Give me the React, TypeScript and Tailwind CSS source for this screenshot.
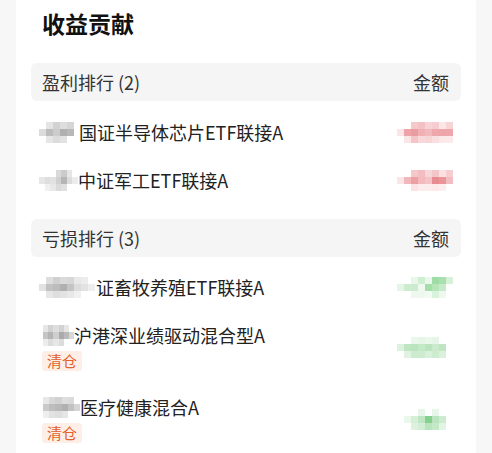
import React from 'react';

type Grid = string[][];

// mosaic blocks standing in for the pixelated parts of the screenshot
const Mosaic = ({ grid, className = '' }: { grid: Grid; className?: string }) => (
  <div className={`flex flex-col blur-[0.4px] ${className}`}>
    {grid.map((row, i) => (
      <div key={i} className="flex">
        {row.map((c, j) => (
          <div key={j} className={`w-[7px] h-[7px] ${c}`} />
        ))}
      </div>
    ))}
  </div>
);

const T = 'bg-transparent';

const gray1: Grid = [
  [T, 'bg-[#e4e4e4]', 'bg-[#d2d2d2]', 'bg-[#dedede]', 'bg-[#d6d6d6]'],
  ['bg-[#dcdcdc]', 'bg-[#bdbdbd]', 'bg-[#cccccc]', 'bg-[#b0b0b0]', 'bg-[#b8b8b8]'],
  [T, 'bg-[#e6e6e6]', 'bg-[#dcdcdc]', 'bg-[#e2e2e2]', T],
];
const gray2: Grid = [
  [T, T, T, 'bg-[#dadada]', 'bg-[#cbcbcb]', 'bg-[#e6e6e6]', T],
  ['bg-[#e6e6e6]', 'bg-[#dedede]', 'bg-[#e2e2e2]', 'bg-[#d0d0d0]', 'bg-[#b6b6b6]', 'bg-[#dcdcdc]', 'bg-[#ececec]'],
  [T, 'bg-[#f0f0f0]', 'bg-[#e8e8e8]', 'bg-[#dadada]', 'bg-[#e0e0e0]', T, T],
];
const gray3: Grid = [
  [T, 'bg-[#dedede]', 'bg-[#d0d0d0]', 'bg-[#dadada]', 'bg-[#d6d6d6]', 'bg-[#e8e8e8]', 'bg-[#ececec]', T],
  ['bg-[#e2e2e2]', 'bg-[#c2c2c2]', 'bg-[#bcbcbc]', 'bg-[#b0b0b0]', 'bg-[#c4c4c4]', 'bg-[#dcdcdc]', 'bg-[#e2e2e2]', 'bg-[#eeeeee]'],
  [T, 'bg-[#e6e6e6]', 'bg-[#dedede]', 'bg-[#e2e2e2]', 'bg-[#e8e8e8]', 'bg-[#f0f0f0]', T, T],
];
const gray4: Grid = [
  ['bg-[#e6e6e6]', 'bg-[#d2d2d2]', 'bg-[#dedede]', 'bg-[#d2d2d2]', 'bg-[#e6e6e6]', T],
  ['bg-[#c4c4c4]', 'bg-[#b4b4b4]', 'bg-[#cecece]', 'bg-[#aaaaaa]', 'bg-[#bababa]', 'bg-[#d8d8d8]'],
  ['bg-[#ececec]', 'bg-[#dcdcdc]', 'bg-[#e6e6e6]', 'bg-[#dcdcdc]', T, T],
];
const gray5: Grid = [
  ['bg-[#e8e8e8]', 'bg-[#d8d8d8]', 'bg-[#d2d2d2]', 'bg-[#dedede]', 'bg-[#dadada]', T],
  ['bg-[#cacaca]', 'bg-[#bebebe]', 'bg-[#b8b8b8]', 'bg-[#b0b0b0]', 'bg-[#c2c2c2]', 'bg-[#d6d6d6]'],
  ['bg-[#eeeeee]', 'bg-[#e2e2e2]', 'bg-[#dedede]', 'bg-[#e6e6e6]', T, T],
];

const red1: Grid = [
  [T, T, 'bg-[#f5c9cb]', 'bg-[#f3c0c3]', 'bg-[#f7d3d5]', 'bg-[#f5cccf]', 'bg-[#fbe6e7]', 'bg-[#f7d5d7]'],
  ['bg-[#fbe5e6]', 'bg-[#eea3a8]', 'bg-[#eb9ca1]', 'bg-[#f0b0b4]', 'bg-[#f2b9bc]', 'bg-[#eea8ac]', 'bg-[#eda5aa]', 'bg-[#eea6ab]'],
  [T, 'bg-[#fbe6e7]', 'bg-[#f4c4c7]', 'bg-[#f8d8da]', 'bg-[#f7d4d6]', 'bg-[#fadfe0]', 'bg-[#fbe9ea]', 'bg-[#fce9ea]'],
];
const red2: Grid = [
  [T, T, 'bg-[#f5c8cb]', 'bg-[#f2bcc0]', 'bg-[#f7d6d8]', 'bg-[#f3c6c9]', 'bg-[#fae0e1]', 'bg-[#f5cdd0]'],
  ['bg-[#fbe6e7]', 'bg-[#f2b7bb]', 'bg-[#ec9fa4]', 'bg-[#f2babd]', 'bg-[#f4c3c6]', 'bg-[#e88c92]', 'bg-[#e9959a]', 'bg-[#f2bdc0]'],
  [T, T, 'bg-[#fbe3e4]', 'bg-[#fceced]', 'bg-[#fceced]', 'bg-[#fde9ea]', 'bg-[#fdeeee]', T],
];
const green1: Grid = [
  [T, T, 'bg-[#e9f6ea]', 'bg-[#cfeed2]', 'bg-[#eaf7eb]', 'bg-[#9fdda6]', 'bg-[#a9e1ae]', 'bg-[#d7f1d9]'],
  ['bg-[#e5f5e6]', 'bg-[#cdeccf]', 'bg-[#cdeccf]', 'bg-[#f0f9f0]', 'bg-[#a4dfaa]', 'bg-[#b5e5b9]', 'bg-[#c7ebca]', T],
  [T, T, 'bg-[#eef8ef]', 'bg-[#eef8ef]', 'bg-[#f3faf3]', 'bg-[#d9f2db]', 'bg-[#eef8ef]', T],
];
const green2: Grid = [
  [T, T, 'bg-[#eaf7eb]', 'bg-[#e6f5e7]', 'bg-[#eaf7eb]', 'bg-[#e6f5e7]', T, T],
  ['bg-[#dcf2de]', 'bg-[#bfe6c3]', 'bg-[#b9e4bd]', 'bg-[#c4e9c7]', 'bg-[#b9e4bd]', 'bg-[#c9ebcc]', 'bg-[#bfe6c3]', T],
  [T, 'bg-[#e0f3e1]', 'bg-[#cdeccf]', 'bg-[#cdeccf]', 'bg-[#d8f0da]', 'bg-[#cdeccf]', 'bg-[#dbf1dc]', T],
];
const green3: Grid = [
  [T, T, T, 'bg-[#e8f6e9]', T, 'bg-[#e8f6e9]', T, T],
  [T, 'bg-[#eaf7eb]', 'bg-[#d6f0d8]', 'bg-[#bfe6c3]', 'bg-[#86d08f]', 'bg-[#b9e4bd]', 'bg-[#cdeccf]', T],
  [T, T, 'bg-[#ddf2de]', 'bg-[#d2eed4]', 'bg-[#b9e4bd]', 'bg-[#c4e9c7]', 'bg-[#e2f4e3]', T],
];

type Fund = {
  prefix: Grid;
  prefixClass: string;
  name: string;
  amount: Grid;
  cleared?: boolean;
};

const gains: Fund[] = [
  { prefix: gray1, prefixClass: 'w-[42px] pl-[2px]', name: '国证半导体芯片ETF联接A', amount: red1 },
  { prefix: gray2, prefixClass: 'w-[41px] pl-[2px]', name: '中证军工ETF联接A', amount: red2 },
];

const losses: Fund[] = [
  { prefix: gray3, prefixClass: 'w-[59px] pl-[2px]', name: '证畜牧养殖ETF联接A', amount: green1 },
  { prefix: gray4, prefixClass: 'w-[37px] pl-[6px]', name: '沪港深业绩驱动混合型A', amount: green2, cleared: true },
  { prefix: gray5, prefixClass: 'w-[43px] pl-[6px]', name: '医疗健康混合A', amount: green3, cleared: true },
];

const SectionHeader = ({ title }: { title: string }) => (
  <div className="h-[38px] rounded-md bg-[#f5f5f5] flex items-center justify-between pl-[11px] pr-3 text-[18px] text-[#333]">
    <span>{title}</span>
    <span>金额</span>
  </div>
);

const FundRow = ({ fund }: { fund: Fund }) => (
  <div className="flex items-center justify-between py-3 pl-[6px] pr-2">
    <div className="flex flex-col">
      <div className="flex items-center h-6">
        <div className={fund.prefixClass}>
          <Mosaic grid={fund.prefix} />
        </div>
        <span className="text-[18px] leading-6 text-[#222] whitespace-nowrap">{fund.name}</span>
      </div>
      {fund.cleared && (
        <span className="mt-1 ml-[5px] w-fit h-5 px-[5px] rounded-[3px] bg-[#fdeee6] text-[#e2622b] text-[15px] leading-5">
          清仓
        </span>
      )}
    </div>
    <Mosaic grid={fund.amount} />
  </div>
);

export default function App() {
  return (
    <div className="min-h-screen bg-[#f7f7f7] font-['Noto_Sans_CJK_SC','Noto_Sans',sans-serif]">
      <div className="ml-4 w-[460px] min-h-[453px] bg-white px-[15px]">
        <h1 className="pt-[7px] pl-[11px] text-[23px] leading-8 font-bold text-[#111]">收益贡献</h1>

        <div className="mt-6">
          <SectionHeader title="盈利排行 (2)" />
          <div className="mt-[7px]">
            {gains.map((f) => (
              <FundRow key={f.name} fund={f} />
            ))}
          </div>
        </div>

        <div className="mt-[15px]">
          <SectionHeader title="亏损排行 (3)" />
          <div className="mt-[6px]">
            {losses.map((f) => (
              <FundRow key={f.name} fund={f} />
            ))}
          </div>
        </div>
      </div>
    </div>
  );
}
